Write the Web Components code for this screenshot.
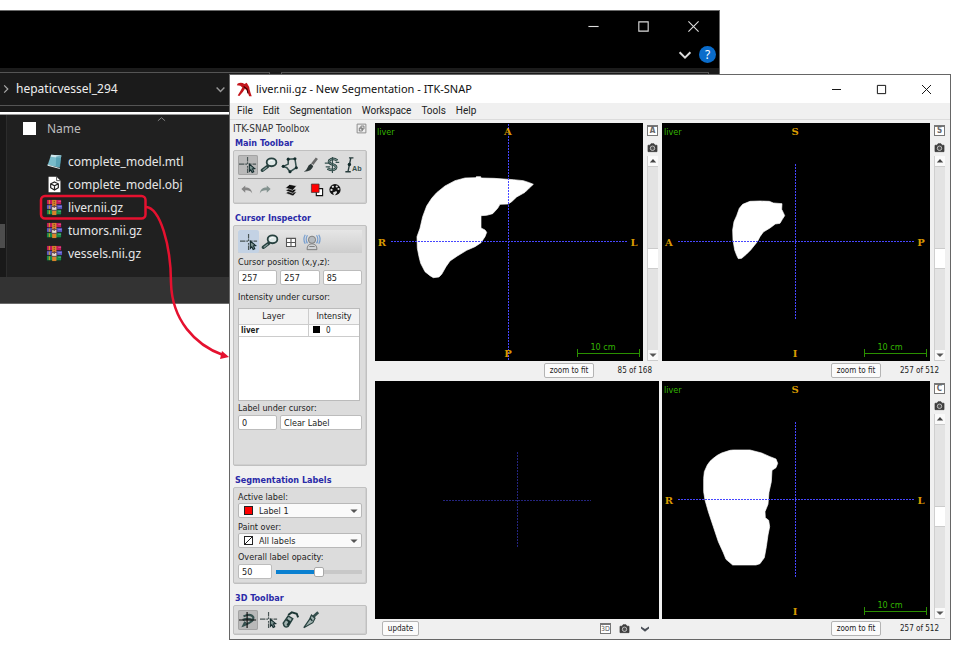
<!doctype html>
<html lang="en">
<head>
<meta charset="utf-8">
<title>ITK-SNAP</title>
<style>
html,body{margin:0;height:100%;background:#fff}
body{overflow:hidden}
</style>
</head>
<body>
<app-desktop></app-desktop>
<script>
const UI = '"DejaVu Sans Condensed","DejaVu Sans",sans-serif';
const SYS = '"Noto Sans","Open Sans",sans-serif';

const define = (name, css, html, after) => customElements.define(name, class extends HTMLElement {
  connectedCallback() {
    if (this.shadowRoot) return;
    const root = this.attachShadow({ mode: 'open' });
    const t = document.createElement('template');
    t.innerHTML = `<style>*{box-sizing:border-box}button{font:inherit;color:inherit;border:0;padding:0;margin:0;background:none}${css}</style>${typeof html === 'function' ? html(this) : html}`;
    root.append(t.content.cloneNode(true));
    if (after) after(root, this);
  }
});

const pointer = '<path d="M11.500 9l6 5-2.500.4 1.400 3-1.800.9-1.500-3-1.600 1.700z" fill="#7f9693" stroke="#152c2e" stroke-width="1.200"/>';
const camera = '<path d="M4 7h3l1-2h4l1 2h3v8.500H4z" fill="#3d3d3d" stroke="#3d3d3d" stroke-linejoin="round"/><circle cx="10" cy="11" r="3" fill="#555" stroke="#ddd"/>';
const books = '<path fill="#c2185b" d="M1 1h15v5H1z"/><path fill="#5b57c8" d="M1 6h16v5H1z"/><path fill="#168a4a" d="M1 11h15v6H1z"/><path stroke="#1a1a1a" stroke-width=".8" d="M0 6h17M0 11h17M1 16.600h16"/><path stroke="#e0a91c" d="M3.500 1v4.500M3.500 7v3.500M3.500 12v4"/><path stroke="#fff" stroke-opacity=".3" d="M13 2.500h3M13 8h3.500M13 13h3"/><path fill="#d9822b" d="M6.500 1h4.500v16H6.500z"/><path fill="#e8dcd0" stroke="#4b3a4b" stroke-width=".9" d="M6 8h5.500v4H6z"/><path stroke="#4b2a1b" d="M8.700 2v3M8.700 6.500v4" stroke-dasharray="1 1"/>';
const ICONS = {
  cross: '<path d="M9.500 1v5m0 1v2m0 2v2m0 1v5M0 9h6m1 0h2m2 0h3m1 0h4" stroke="#4a5555" stroke-width="1.300"/>' + pointer,
  zoom: '<path d="M8.500 11.500L2.500 16" stroke="#27413f" stroke-width="3.600" stroke-linecap="round"/><path d="M7.500 12.500L3 16" stroke="#8aa19e" stroke-width="1.200"/><ellipse cx="12.800" cy="7" rx="5.400" ry="4.400" fill="#dfe9e8" stroke="#27413f" stroke-width="2"/><path d="M10 6.500q1.500-2 4-1.500" stroke="#fff"/>',
  poly: '<path d="M2.500 11.500L8 9 8 3.500 15.500 3 17 13 10 17.500 6.500 13z" stroke="#35504e" stroke-width="1.700"/><g fill="#142c2c"><circle cx="8" cy="3.500" r="1.700"/><circle cx="15.500" cy="3" r="1.700"/><circle cx="17" cy="13" r="1.700"/><circle cx="10" cy="17.500" r="1.700"/><circle cx="2.500" cy="11.500" r="1.700"/></g>',
  brush: '<path d="M16.500 2.500L11 9.500" stroke="#6a6a6a" stroke-width="3"/><path d="M10 8.500l2.500 2.500q-1.500 6-10.500 6.500 3-1.500 4-4.500 1-3.500 4-4.500z" fill="#2c3838"/><path d="M10.500 8.500l2.500 2.500" stroke="#ddd"/>',
  snake: '<path d="M16 5q-5-3.500-9 0 -1.500 3 4 4.500 5 1.500 3 4.500 -3 3-9 0" stroke="#27413f" stroke-width="3"/><path d="M16 5q-5-3.500-9 0 -1.500 3 4 4.500 5 1.500 3 4.500 -3 3-9 0" stroke="#a7bdba" stroke-width=".8"/><path d="M10.500 1v18M2 8h6m6-1h4M3 12h5" stroke="#35504e" stroke-width="1.300"/>',
  note: '<path d="M4.500 17L7.500 2.500M5.500 2h5M1.500 17.500h6" stroke="#263b3b" stroke-width="1.500"/><circle cx="6" cy="9.500" r="1.900" fill="#142c2c"/><text x="9" y="17" font-size="8" font-family="Liberation Sans" font-weight="bold" fill="#35504e">Ab</text>',
  undo: '<path d="M2 8.500l5.500-5v3c6 0 9 2.500 10 8.500-2.500-4-5-4.700-10-4.500V14z" fill="#858585"/>',
  redo: '<path d="M18 8.500l-5.500-5v3c-6 0-9 2.500-10 8.500 2.500-4 5-4.700 10-4.500V14z" fill="#83928f"/>',
  layers: '<g fill="#111" stroke="#eee" stroke-width=".9"><path d="M2 14.500l5-3 11 1.500-5 5.500z"/><path d="M2 10.800l5-3 11 1.500-5 5.500z"/><path d="M2 7l6-5 10 2-5.500 6.500z"/></g>',
  labels: '<path d="M9 8h9v10H9z" fill="#fff" stroke="#111" stroke-width="1.600"/><path d="M2 1.500h11v12H2z" fill="#f00" stroke="#333"/>',
  palette: '<circle cx="10" cy="9.500" r="8" fill="#111"/><g fill="#ddd"><circle cx="7" cy="5.500" r="1.600"/><circle cx="12.500" cy="5" r="1.600"/><circle cx="5" cy="9.900" r="1.600"/><circle cx="15" cy="8.500" r="1.500"/><path d="M7 13.500l5-2 1 2-4 5z"/></g>',
  grid: '<path d="M5 6h10v9H5zM10 6v9M5 10.500h10" fill="#fff" stroke="#555" stroke-width="1.200"/>',
  person: '<circle cx="10" cy="7.500" r="4" fill="#b5babe" stroke="#777"/><path d="M4.500 18.500q0-6.500 5.500-6.500t5.500 6.500z" fill="#d0d3d6" stroke="#777"/><path d="M5 2.500q-3 4.500 0 9M15 2.500q3 4.500 0 9M2.500 2q-3 5 0 10M17.500 2q3 5 0 10" stroke="#7aa0cf" stroke-width="1.400"/><path d="M7 15h6" stroke="#777"/>',
  rotate: '<path d="M5 6q8-4 11 1 1 5-11 9l2-4M4 10q7-3 12 1" stroke="#35504e" stroke-width="2.400"/><path d="M9 1v18M0 10h19" stroke="#111" stroke-width="1.300"/>',
  spray: '<path d="M2.500 13.500l5.500-8 5 3-5 8.500q-4.500 2.500-5.500-3.500z" fill="#9fb1af" stroke="#27413f" stroke-width="1.700"/><path d="M8 4.500l4-3 5.500 1.500 1.500 4M6 9.500l3.500 2.500-2.500 4" stroke="#1b3533" stroke-width="2.200"/>',
  scalpel: '<path d="M18 1.500l-6 5.500" stroke="#35504e" stroke-width="3"/><path d="M10.500 4.500l4 3.500L12 13 2 18.500 8.500 9z" fill="#9fb1af" stroke="#27413f" stroke-width="1.300"/><path d="M9 8l2.500 3" stroke="#1b3533" stroke-width="1.500"/>',
  camera,
  dock: '<path d="M2 2h16v16H2z" fill="#eee" stroke="#888" stroke-width="1.700"/><path d="M9 5.500h5.500V11H9zM6 9h5.500v5.500H6z" fill="#eee" stroke="#777" stroke-width="1.700"/>',
  down: '<path d="M2 5l8 5 8-5v4l-8 6.500L2 9z" fill="#4a4f57"/>',
  chev: '<path d="M4 7l6 6 6-6" stroke="currentColor" stroke-width="2.200"/>',
  right: '<path d="M7 4l6 6-6 6" stroke="currentColor" stroke-width="2"/>',
  up: '<path d="M2 13l8-7 8 7" stroke="currentColor" stroke-width="2"/>',
  triup: '<path d="M2 14l8-9 8 9z" fill="#444"/>',
  tridown: '<path d="M1 6l9 9 9-9z" fill="#555"/>',
  min: '<path d="M4 10h12" stroke="currentColor" stroke-width="1.300"/>',
  max: '<path d="M4.500 4.500h11v11h-11z" stroke="currentColor" stroke-width="1.300"/>',
  close: '<path d="M4 4l12 12M16 4L4 16" stroke="currentColor" stroke-width="1.300"/>',
  app: '<path d="M2 3q4-2 8 .5L12.500 2l1.500 2.500q2 2.500 2 5.500 1 4 2.500 8h-3L13 11.500 10.500 9 8 13l-4 4.500-2-.5 3-5 2.500-4.500-2.500-2L1 5z" fill="#c4161c"/><path d="M9 6.500l4 3 1 5" stroke="#300" stroke-width="1.200"/>',
  mtl: '<path d="M6 2l12 1-2 14-14-3z" fill="#79bccb"/><path d="M6 2l12 1-.500 3-12-1.500z" fill="#cfe6ec"/><path d="M12 4l6-1-1.500 14-5-1z" fill="#4b98ad" fill-opacity=".7"/><path d="M1.500 13.500L16 17.500l.5 1.200L2 15z" fill="#e8f1f3"/>',
  obj: '<path d="M3 1h9.500L17 5.500V19H3z" fill="#fff"/><path d="M12.500 1v4.500H17" stroke="#333"/><path d="M10 7l4.500 2.200v4.600L10 16.500l-4.500-2.700V9.200zM5.500 9.200L10 11.500l4.500-2.300M10 11.500v5" stroke="#222" stroke-width="1.400"/>',
  rar: books
};
define('ui-icon',
  ':host{display:inline-block;width:20px;height:20px;flex:none}svg{display:block;width:100%;height:100%;overflow:visible}',
  el => `<svg viewBox="${el.getAttribute('name') === 'rar' ? '0 0 18 18' : '0 0 20 20'}" fill="none" aria-hidden="true">${ICONS[el.getAttribute('name')] || ''}</svg>`);

define('tool-button',
  `:host{display:block;flex:none;width:20px;height:20px}
   :host([small]){width:18px;height:18px}
   :host([wide]){width:21px;height:23px}
   button{display:flex;align-items:center;justify-content:center;width:100%;height:100%;border-radius:2px}
   :host([on]) button{background:#b9b9b9;box-shadow:inset 0 0 0 1px #a3a3a3}
   :host([tab]) button{background:#c3d2e4}
   ui-icon{width:18px;height:18px}
   :host([small]) ui-icon{width:14px;height:14px}`,
  el => `<button type="button" aria-label="${el.getAttribute('icon')}"><ui-icon name="${el.getAttribute('icon')}"></ui-icon></button>`);

define('tool-group',
  `:host{display:block;flex:none}
   h2{margin:0;padding-left:2px;font:bold 9px/13px ${UI};color:#2a2aa8}
   .box{border:1px solid #c0c0c0;border-radius:2px;background:#dcdcdc;padding:4px;box-shadow:inset -1px -1px 0 #cfcfcf}`,
  el => `<h2>${el.getAttribute('heading')}</h2><div class="box"><slot></slot></div>`);

define('file-row',
  `:host{display:flex;align-items:center;height:23px;padding-left:46px;font:12px/20px ${SYS};color:#e6e6e6}
   ui-icon{width:17px;height:17px;margin-right:5px}`,
  el => `<ui-icon name="${el.getAttribute('icon')}"></ui-icon><slot></slot>`);

define('explorer-window',
  `:host{display:flex;flex-direction:column;background:#1b1b1b;border:1px solid #6a6a6a;border-left:0;color:#ddd;font:12px/20px ${SYS}}
   .caption{background:#000;padding-bottom:1px}
   .sys,.help{display:flex;justify-content:flex-end;align-items:center}
   .sys{height:31px;padding-right:1px}.sys button{width:50px;height:20px;display:grid;place-items:center}
   .sys ui-icon{width:17px;height:17px}
   .help{height:25px;gap:5px;padding-right:3px}
   .help ui-icon{width:18px;height:18px}
   .q{width:17px;height:17px;border-radius:50%;background:#0a6ccb;color:#fff;font-size:12px;line-height:17px;text-align:center}
   .address{display:flex;gap:11px;padding:4px 10px 6px 0}
   .path{display:flex;align-items:center;width:270px;height:34px;border:1px solid #555;border-left:0;color:#eee}
   .path ui-icon{width:12px;height:12px;color:#aaa;margin-right:4px}
   .path .drop{width:13px;height:13px;margin:0 42px 0 auto;color:#999}
   .find{flex:1;border:1px solid #555;min-width:0}
   .rule{height:3px;background:#fff;border-bottom:1px solid #999}
   .body{display:flex;flex:1;background:#202020}
   .nav{width:7px;background:#191919;border-right:1px solid #2c2c2c;padding-top:109px}
   .nav i{display:block;width:5px;height:24px;background:#4d4d4d}
   .list{flex:1;min-width:0;margin-left:-7px;padding-bottom:12px}
   .head{display:grid;grid-template-columns:24px auto 1fr;align-items:center;height:35px;padding:0 0 8px 23px;color:#bdbdbd}
   .head input{appearance:none;width:13px;height:13px;margin:0;background:#fff}
   .head ui-icon{width:9px;height:9px;align-self:start;margin-left:76px;color:#888}
   .status{height:26px;background:#333}`,
  `<div class="caption"><div class="sys">
      <button aria-label="Minimize"><ui-icon name="min"></ui-icon></button><button aria-label="Maximize"><ui-icon name="max"></ui-icon></button><button aria-label="Close"><ui-icon name="close"></ui-icon></button></div>
    <div class="help"><ui-icon name="chev"></ui-icon><button class="q">?</button></div></div>
   <div class="address"><div class="path"><ui-icon name="right"></ui-icon><span>hepaticvessel_294</span><ui-icon class="drop" name="chev"></ui-icon></div><div class="find"></div></div>
   <div class="rule"></div>
   <div class="body"><div class="nav"><i></i></div><div class="list">
     <div class="head"><input type="checkbox" aria-label="Select all"><span>Name</span><ui-icon name="up"></ui-icon></div>
     <file-row icon="mtl">complete_model.mtl</file-row><file-row icon="obj">complete_model.obj</file-row>
     <file-row icon="rar">liver.nii.gz</file-row><file-row icon="rar">tumors.nii.gz</file-row><file-row icon="rar">vessels.nii.gz</file-row>
   </div></div><div class="status"></div>`);

define('slice-canvas',
  `:host{display:block;background:#000;min-width:0;min-height:0;overflow:hidden}
   svg{display:block;width:100%;height:100%}
   .n{font:9px ${UI};fill:#33b400}
   .o{font:bold 10px "DejaVu Serif",serif;fill:#d99a00;text-anchor:middle}
   .x{stroke:#4646ff;stroke-width:1;stroke-dasharray:2 1;shape-rendering:crispEdges}
   .s{stroke:#2a9000;shape-rendering:crispEdges}`,
  el => {
    const [t, r, b, l] = el.getAttribute('axes').split('');
    const full = el.hasAttribute('full');
    return `<svg viewBox="0 0 268 238" preserveAspectRatio="xMinYMin meet" fill="none">
      <g transform="${el.getAttribute('place')} scale(.33333)"><path d="${el.getAttribute('shape')}" fill="#fff" stroke="#fff" stroke-width="2" stroke-linejoin="round"/></g>
      <path class="x" d="M16 118.500H253M133.500 ${full ? 1 : 41}V${full ? 238 : 196}"/>
      <text class="n" x="2" y="12">liver</text>
      <text class="o" x="133" y="12">${t}</text><text class="o" x="133" y="234">${b}</text>
      <text class="o" x="7" y="123">${l}</text><text class="o" x="259" y="123">${r}</text>
      <path class="s" d="M202.500 226v8M264.500 226v8M202 230.500h62"/>
      <text class="n" x="228" y="227" text-anchor="middle">10 cm</text></svg>`;
  });

define('slice-view',
  `:host{display:grid;grid-template:minmax(0,1fr) 20px/minmax(0,1fr) 13px;column-gap:3px;color:#222;font:9px/12px ${UI}}
   .side{display:flex;flex-direction:column;align-items:center;padding-top:2px}
   .badge{width:11px;height:11px;border:1px solid #777;border-top-width:2px;background:#fff;font:bold 8px/8px ${UI};color:#666;text-align:center}
   .side ui-icon{width:15px;height:15px}
   .cam{margin:4px 0 1px;height:15px}
   .bar{flex:1;width:11px;display:grid;grid-template-rows:11px 1fr 11px;background:#e3e3e3;border-left:1px solid #cfcfcf}
   .bar button{background:#fafafa;display:grid;place-items:center;border-bottom:1px solid #ccc}
   .bar ui-icon{width:8px;height:8px}
   .track{display:flex;flex-direction:column;justify-content:center}
   .thumb{height:21px;background:#fff;border:1px solid #ccc;border-width:1px 0}
   .foot{grid-column:1/3;display:flex;justify-content:flex-end;align-items:center;gap:16px;padding:0 7px 1px 0}
   .foot button{height:15px;width:50px;border:1px solid #b4b4b4;border-radius:2px;background:#fbfbfb;font-size:8px}
   .foot span{width:42px;text-align:right;white-space:nowrap;font-size:8px}`,
  el => `<slot></slot>
   <div class="side"><button class="badge">${el.getAttribute('badge')}</button><button class="cam" aria-label="Screenshot"><ui-icon name="camera"></ui-icon></button>
     <div class="bar"><button aria-label="Next slice"><ui-icon name="triup"></ui-icon></button><div class="track"><div class="thumb"></div></div><button aria-label="Previous slice"><ui-icon name="tridown"></ui-icon></button></div></div>
   <div class="foot"><button>zoom to fit</button><span>${el.getAttribute('count')}</span></div>`);

define('scene-view',
  `:host{display:grid;grid-template-rows:minmax(0,1fr) 20px;color:#222;font:8px/12px ${UI}}
   .c{background:#000;min-height:0}svg{display:block;width:100%;height:100%}
   .foot{display:flex;align-items:center;padding:0 9px 1px 7px}
   .foot>button:first-child{width:37px;height:15px;border:1px solid #b4b4b4;border-radius:2px;background:#fbfbfb;margin-right:auto}
   .badge{width:11px;height:11px;border:1px solid #777;border-top-width:2px;background:#fff;font-size:7px;line-height:8px;color:#555}
   ui-icon{display:block;width:15px;height:15px}
   .cam{margin:0 8px 0 6px}.more ui-icon{width:10px;height:10px}`,
  `<div class="c"><svg viewBox="0 0 284 238" preserveAspectRatio="xMinYMin meet"><path d="M68 119.500H216M142.500 71V167" stroke="#24247e" stroke-dasharray="2 1" shape-rendering="crispEdges"/></svg></div>
   <div class="foot"><button>update</button><button class="badge">3D</button><button class="cam" aria-label="Screenshot"><ui-icon name="camera"></ui-icon></button><button class="more" aria-label="More"><ui-icon name="down"></ui-icon></button></div>`);

define('label-select',
  `:host{display:block;position:relative;height:15px}
   select{appearance:none;display:block;width:100%;height:15px;border:1px solid #b8b8b8;border-radius:2px;background:#fafafa;padding:0 14px 0 20px;font:9px/12px ${UI};color:#222}
   i{position:absolute;left:6px;top:3px;width:9px;height:9px;border:1px solid #222;background:#f00}
   :host([none]) i{background:linear-gradient(to bottom right,#fff 43%,#222 43% 57%,#fff 57%)}
   ui-icon{position:absolute;right:4px;top:4px;width:8px;height:8px;pointer-events:none}`,
  el => `<select aria-label="${el.getAttribute('label')}"><option>${el.getAttribute('value')}</option></select><i></i><ui-icon name="tridown"></ui-icon>`);

define('tool-box',
  `:host{display:flex;flex-direction:column;width:134px;flex:none;color:#222;font:9px/12px ${UI}}
   .title{display:flex;flex:none;justify-content:space-between;align-items:center;height:17px;font:10px/12px ${UI};color:#333}
   .title ui-icon{width:11px;height:11px}
   .row{display:flex;gap:1px}.sep{height:1px;background:#999;margin:3px 0 2px}
   .two{gap:8px}.two div{display:flex}
   .tabs{display:flex;height:23px;margin-bottom:3px;background:linear-gradient(#e6e6e6,#cdcdcd)}
   label,.cap{display:block;white-space:nowrap}
   input[type=text]{width:100%;min-width:0;height:15px;border:1px solid #bcbcbc;border-radius:2px;background:#fff;padding:0 3px;font:9px/12px ${UI};color:#222}
   .xyz{display:grid;grid-template-columns:repeat(3,1fr);gap:3px;margin:2px 0 6px}
   .tbl{height:93px;margin:5px 2px 1px 0;border:1px solid #bbb;background:#fff}
   table{width:100%;border-collapse:collapse;table-layout:fixed}
   th{font-weight:normal;height:15px;padding:0;background:#f3f3f3;border-bottom:1px solid #ccc}
   th+th,td+td{border-left:1px solid #ccc}
   td{height:12px;padding:0 2px;font-size:8px;line-height:11px;border-bottom:1px solid #ccc;font-weight:bold}
   td+td{font-weight:normal;padding-left:4px}
   td i{display:inline-block;width:7px;height:7px;background:#000;margin-right:6px}
   .pair{display:grid;grid-template-columns:39px 1fr;gap:3px;margin:1px 0 31px}
   .op{display:grid;grid-template-columns:34px 1fr;gap:4px;align-items:center;margin-top:1px}
   input[type=range]{appearance:none;width:100%;height:11px;margin:0;background:linear-gradient(90deg,#0a80d0 50%,#c8c8c8 50%) center/100% 4px no-repeat}
   input[type=range]::-webkit-slider-thumb{appearance:none;width:10px;height:10px;border:1px solid #aaa;border-radius:2px;background:#fff}
   .group{margin-bottom:8px}
   .seg{line-height:11px}
   label-select{margin:0 0 4px}`,
  `<div class="title"><span>ITK-SNAP Toolbox</span><ui-icon name="dock"></ui-icon></div>
   <tool-group class="group" heading="Main Toolbar"><div class="row"><tool-button on icon="cross"></tool-button><tool-button icon="zoom"></tool-button><tool-button icon="poly"></tool-button><tool-button icon="brush"></tool-button><tool-button icon="snake"></tool-button><tool-button icon="note"></tool-button></div>
     <div class="sep"></div>
     <div class="row two"><div><tool-button small icon="undo"></tool-button><tool-button small icon="redo"></tool-button></div><tool-button small icon="layers"></tool-button><div><tool-button small icon="labels"></tool-button><tool-button small icon="palette"></tool-button></div></div></tool-group>
   <tool-group class="group" heading="Cursor Inspector">
     <div class="tabs"><tool-button wide tab icon="cross"></tool-button><tool-button wide icon="zoom"></tool-button><tool-button wide icon="grid"></tool-button><tool-button wide icon="person"></tool-button></div>
     <label for="x">Cursor position (x,y,z):</label>
     <div class="xyz"><input type="text" id="x" value="257"><input type="text" aria-label="y" value="257"><input type="text" aria-label="z" value="85"></div>
     <span class="cap">Intensity under cursor:</span>
     <div class="tbl"><table><colgroup><col style="width:58%"><col></colgroup><tr><th>Layer</th><th>Intensity</th></tr><tr><td>liver</td><td><i></i>0</td></tr></table></div>
     <label for="lab">Label under cursor:</label>
     <div class="pair"><input type="text" id="lab" value="0"><input type="text" aria-label="Label name" value="Clear Label"></div></tool-group>
   <tool-group class="group seg" heading="Segmentation Labels">
     <span class="cap">Active label:</span><label-select label="Active label" value="Label 1"></label-select>
     <span class="cap">Paint over:</span><label-select none label="Paint over" value="All labels"></label-select>
     <label for="op">Overall label opacity:</label>
     <div class="op"><input type="text" id="op" value="50"><input type="range" aria-label="Opacity" value="50"></div></tool-group>
   <tool-group heading="3D Toolbar"><div class="row"><tool-button on icon="rotate"></tool-button><tool-button icon="cross"></tool-button><tool-button icon="spray"></tool-button><tool-button icon="scalpel"></tool-button></div></tool-group>`);

const AXIAL = 'M142 535L141 500 150 475 158 440 170 408 185 385 200 368 225 348 255 332 285 324 317 323 319 320 332 320 333 324 372 325 430 329 460 332 478 338 490 343 478 354 465 367 440 381 425 395 415 402 390 403 383 415 368 431 350 436 333 437 333 474 345 480 350 487 345 500 333 518 315 530 290 541 262 558 240 573 228 590 215 613 207 621 190 623 180 617 165 605 152 580 147 560z';
const SAGITTAL = 'M254 540L249 510 248 480 252 455 260 437 268 415 278 403 300 394 330 393 358 394 370 399 396 401 395 418 400 428 404 437 397 448 390 460 376 462 360 474 340 486 330 500 322 515 302 540 290 552 275 565 265 566 260 556z';
const CORONAL = 'M161 350L161 310 163 290 172 270 180 259 190 250 202 241 215 234 240 226 250 225 300 225 335 234 360 245 378 252 383 265 378 278 366 286 364 320 357 352 354 388 345 410 346 428 356 436 359 455 354 480 349 515 343 548 330 566 318 570 248 570 228 553 220 533 205 500 190 455 175 410 165 375z';

define('snap-window',
  `:host{display:flex;flex-direction:column;background:#f0f0f0;border:1px solid #666;color:#222}
   header{display:flex;align-items:center;height:28px;padding:0 1px 0 6px;background:#fff;font:11px/20px ${SYS};color:#111}
   header>ui-icon{width:17px;height:17px;margin-right:3px}
   header span{flex:1;white-space:nowrap}
   header button{width:45px;height:27px;display:grid;place-items:center}
   header button ui-icon{width:15px;height:15px}
   nav{display:flex;gap:10px;height:17px;align-items:center;padding-left:7px;border-bottom:1px solid #dcdcdc;font:10px/14px Roboto,sans-serif}
   main{display:flex;flex:1;gap:8px;padding:0 4px 0 3px;min-height:0}
   .views{flex:1;min-width:0;display:grid;grid-template:minmax(0,1fr) minmax(0,1fr)/minmax(0,1fr) minmax(0,1fr);column-gap:3px;padding-top:3px}`,
  `<header><ui-icon name="app"></ui-icon><span>liver.nii.gz - New Segmentation - ITK-SNAP</span><button aria-label="Minimize"><ui-icon name="min"></ui-icon></button><button aria-label="Maximize"><ui-icon name="max"></ui-icon></button><button aria-label="Close"><ui-icon name="close"></ui-icon></button></header>
   <nav><button>File</button><button>Edit</button><button>Segmentation</button><button>Workspace</button><button>Tools</button><button>Help</button></nav>
   <main><tool-box></tool-box><div class="views">
     <slice-view badge="A" count="85 of 168"><slice-canvas full axes="ALPR" place="translate(-5 -53)" shape="${AXIAL}"></slice-canvas></slice-view>
     <slice-view badge="S" count="257 of 512"><slice-canvas axes="SPIA" place="translate(-12 -53)" shape="${SAGITTAL}"></slice-canvas></slice-view>
     <scene-view></scene-view>
     <slice-view badge="C" count="257 of 512"><slice-canvas axes="SLIR" place="translate(-12 -6)" shape="${CORONAL}"></slice-canvas></slice-view>
   </div></main>`);

define('app-desktop',
  `:host{display:block;position:relative;min-height:100vh}
   explorer-window{position:absolute;left:0;right:237px;top:10px}
   snap-window{position:absolute;left:229px;right:6px;top:74px;bottom:10px}
   svg{position:absolute;left:0;top:0;pointer-events:none}`,
  `<explorer-window></explorer-window><snap-window></snap-window>
   <svg width="240" height="380" fill="none" stroke="#e5112f" stroke-width="2.500"><rect x="41" y="196" width="104.500" height="22.500" rx="4"/><path d="M146 207C160 208 171 245 171 283C172 320 195 345 223 355"/><path d="M222 351l7 6-9 2z" fill="#e5112f" stroke="none"/></svg>`);
</script>
</body>
</html>
